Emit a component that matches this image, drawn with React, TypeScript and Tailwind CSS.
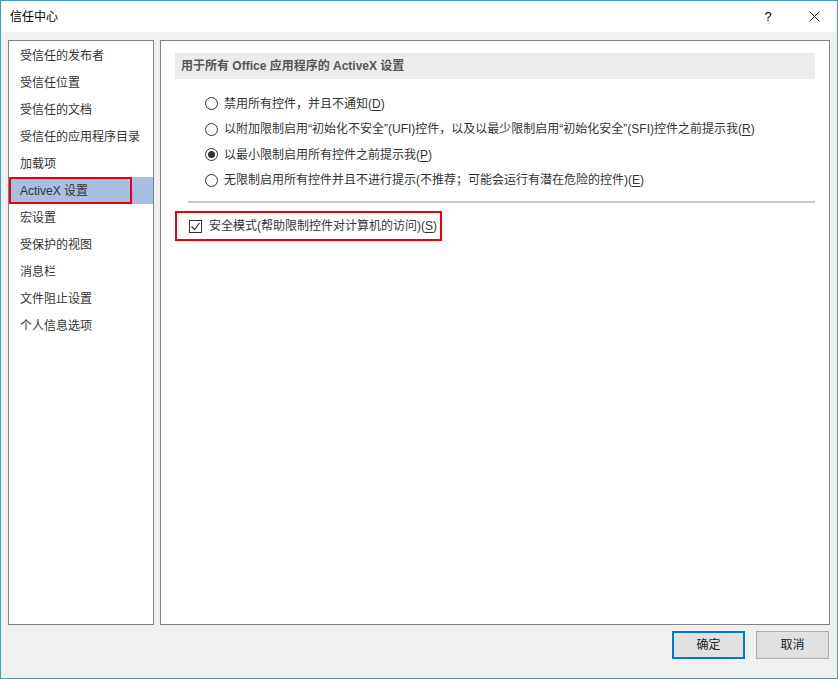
import { useState } from "react";

// Left-hand navigation of the trust center dialog.
const NAV = [
  "受信任的发布者",
  "受信任位置",
  "受信任的文档",
  "受信任的应用程序目录",
  "加载项",
  "ActiveX 设置",
  "宏设置",
  "受保护的视图",
  "消息栏",
  "文件阻止设置",
  "个人信息选项",
];

// Each option: text before the accelerator key, then the key itself.
const OPTIONS: [string, string][] = [
  ["禁用所有控件，并且不通知(", "D"],
  ["以附加限制启用“初始化不安全”(UFI)控件，以及以最少限制启用“初始化安全”(SFI)控件之前提示我(", "R"],
  ["以最小限制启用所有控件之前提示我(", "P"],
  ["无限制启用所有控件并且不进行提示(不推荐；可能会运行有潜在危险的控件)(", "E"],
];

// Latin glyphs (and the narrow curly quotes) from Arial-metric font, CJK from Noto.
const FONT = "font-['Liberation_Sans','Noto_Sans_CJK_SC',sans-serif]";

function Radio({ checked }: { checked: boolean }) {
  return (
    <span className="flex h-[13px] w-[13px] items-center justify-center rounded-full border border-[#333] bg-white">
      {checked && <span className="h-[7px] w-[7px] rounded-full bg-[#333]" />}
    </span>
  );
}

export default function App() {
  const [choice, setChoice] = useState(2);
  const [safe, setSafe] = useState(true);

  return (
    <div
      className={`flex h-[679px] w-[838px] flex-col overflow-hidden border border-[#3a9fc0] bg-[#f0f0f0] text-[12px] text-[#333] ${FONT}`}
    >
      {/* ---- title bar ---- */}
      <div className="flex h-[31px] shrink-0 items-center bg-white pl-[9px]">
        <span className="flex-1 text-[12px] text-black">信任中心</span>
        <span className="w-[46px] text-center text-[13px] text-black">?</span>
        <span className="flex w-[46px] items-center justify-center">
          <svg width="11" height="11" viewBox="0 0 11 11">
            <path d="M0.5 0.5 L10.5 10.5 M10.5 0.5 L0.5 10.5" stroke="#111" strokeWidth="1" />
          </svg>
        </span>
      </div>

      {/* ---- body ---- */}
      <div className="flex h-[593px] shrink-0 gap-[6px] pl-[7px] pr-[7px] pt-[8px]">
        <nav className="w-[146px] border border-[#828282] bg-white pt-[1px]">
          {NAV.map((item, i) => (
            <div
              key={item}
              className={`relative flex h-[27px] items-center pl-[11px] ${i === 5 ? "bg-[#a7bfe0]" : ""}`}
            >
              {item}
              {i === 5 && (
                <span className="absolute left-0 top-0 h-[27px] w-[123px] border-2 border-[#e8000b]" />
              )}
            </div>
          ))}
        </nav>

        <section className="flex-1 border border-[#828282] bg-white px-[14px] pt-[12px]">
          <div className="flex h-[26px] items-center bg-[#ececec] px-[6px] font-bold text-[#555]">
            用于所有 Office 应用程序的 ActiveX 设置
          </div>

          <div className="pl-[30px] pt-[12px]">
            {OPTIONS.map(([text, key], i) => (
              <label
                key={key}
                className="flex h-[25.5px] cursor-default items-center gap-[6px]"
                onClick={() => setChoice(i)}
              >
                <Radio checked={choice === i} />
                <span>
                  {text}
                  <span className="underline underline-offset-2">{key}</span>)
                </span>
              </label>
            ))}
          </div>

          <div className="ml-[13px] mt-[8px] h-[2px] bg-[#c8c8c8]" />

          <div
            className="relative mt-[8px] flex h-[30px] w-[267px] items-center gap-[7px] border-2 border-[#e8000b] pl-[12px]"
            onClick={() => setSafe(!safe)}
          >
            <span className="flex h-[13px] w-[13px] items-center justify-center border border-[#333] bg-white">
              {safe && (
                <svg width="11" height="11" viewBox="0 0 11 11">
                  <path d="M1.5 5.5 L4.5 8.5 L9.5 2" fill="none" stroke="#333" strokeWidth="1.2" />
                </svg>
              )}
            </span>
            <span>
              安全模式(帮助限制控件对计算机的访问)(<span className="underline underline-offset-2">S</span>)
            </span>
          </div>
        </section>
      </div>

      {/* ---- buttons ---- */}
      <div className="flex flex-1 justify-end gap-[11px] pr-[8px] pt-[6px]">
        <button className="h-[28px] w-[73px] border-2 border-[#0078d7] bg-[#e1e1e1] text-[#222]">
          确定
        </button>
        <button className="h-[28px] w-[73px] border border-[#adadad] bg-[#e1e1e1] text-[#222]">
          取消
        </button>
      </div>
    </div>
  );
}
